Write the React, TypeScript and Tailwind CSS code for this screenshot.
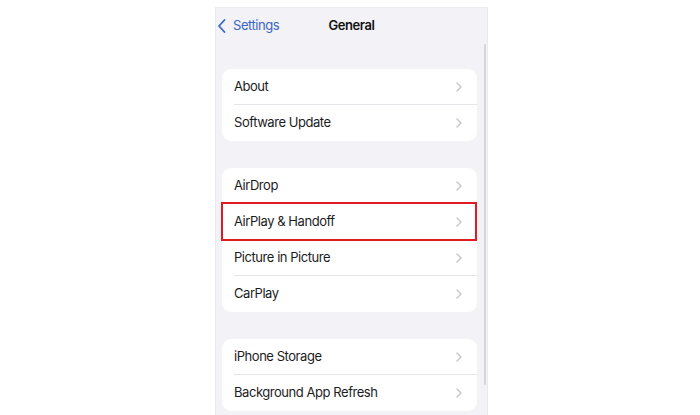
import React from "react";

const Chevron = () => (
  <svg width="6" height="10" viewBox="0 0 6 10" fill="none">
    <path d="M1 1l4 4-4 4" stroke="#c5c5c9" strokeWidth="1.4" strokeLinecap="round" strokeLinejoin="round" />
  </svg>
);

type RowProps = { label: string; last?: boolean; highlight?: boolean };

const Row = ({ label, last, highlight }: RowProps) => (
  <div className="relative flex h-[36px] items-stretch pl-[12px]">
    <div className={`flex flex-1 items-center justify-between pr-[15px] ${last ? "" : "border-b border-[#e6e6ea]"}`}>
      <span className="text-[13px] tracking-[-0.45px] text-[#1c1c1e]">{label}</span>
      <Chevron />
    </div>
    {highlight && <div className="absolute -left-[1px] -top-[2px] -bottom-[1px] right-0 border-2 border-[#e01b22]" />}
  </div>
);

const Card = ({ rows, highlight }: { rows: string[]; highlight?: number }) => (
  <div className="rounded-[9px] bg-white">
    {rows.map((r, i) => (
      <Row key={r} label={r} last={i === rows.length - 1} highlight={highlight === i} />
    ))}
  </div>
);

export default function App() {
  return (
    <div className="h-[415px] w-[700px] overflow-hidden bg-white" style={{ fontFamily: "Inter, 'Noto Sans', sans-serif" }}>
      <div className="ml-[215px] mt-[7px] h-[408px] w-[273px] border-l border-r border-t border-[#e9e9ee] bg-[#f2f2f7] relative">
        <div className="relative flex h-[36px] items-center">
          <div className="flex items-center pl-[1px] text-[#3a66c4]">
            <svg width="10" height="16" viewBox="0 0 10 16" fill="none">
              <path d="M7.5 2L2 8l5.5 6" stroke="#3a66c4" strokeWidth="1.8" strokeLinecap="round" strokeLinejoin="round" />
            </svg>
            <span className="ml-[6px] text-[13px] tracking-[-0.45px]">Settings</span>
          </div>
          <div className="absolute left-0 right-0 text-center text-[13px] font-semibold tracking-[-0.4px] text-[#111]">General</div>
        </div>
        <div className="flex flex-col gap-[27px] pl-[6px] pr-[10px] pt-[25px]">
          <Card rows={["About", "Software Update"]} />
          <Card rows={["AirDrop", "AirPlay & Handoff", "Picture in Picture", "CarPlay"]} highlight={1} />
          <Card rows={["iPhone Storage", "Background App Refresh"]} />
        </div>
        <div className="absolute left-[268px] top-[36px] h-[341px] w-[2px] rounded-full bg-[#d6d6da]" />
      </div>
    </div>
  );
}
